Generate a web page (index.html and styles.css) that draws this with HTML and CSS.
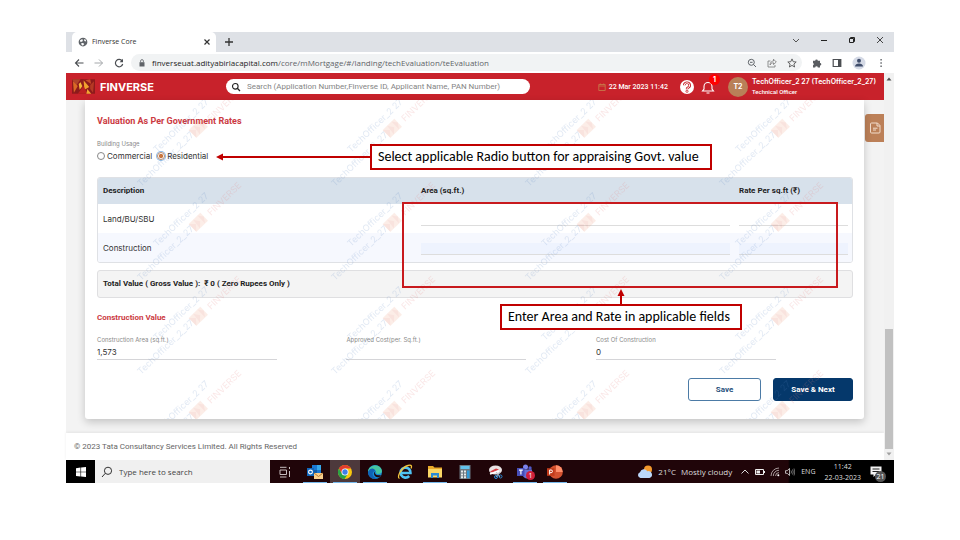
FILE: index.html
```html
<!DOCTYPE html>
<html lang="en">
<head>
<meta charset="utf-8">
<title>Finverse Core</title>
<link rel="stylesheet" href="styles.css">
</head>
<body>
<div class="window">
  <div class="tabstrip">
    <div class="tab">
      <svg class="i10" viewBox="0 0 16 16"><circle cx="8" cy="8" r="7" fill="#5f6368"/><path d="M3 5.500l3-2 2 1-1 2.500-3 1zM10 3l2.500 1.500L13 7l-3-.5zM5 10l3-.5 2 1.500-2 2.500-2-.5z" fill="#fff"/></svg>
      <span class="tab-title">Finverse Core</span>
      <button class="plain" aria-label="Close tab"><svg class="i8" viewBox="0 0 8 8"><path d="M1.500 1.500l5 5m0-5l-5 5" stroke="#333" stroke-width="1.200"/></svg></button>
    </div>
    <button class="plain newtab" aria-label="New tab"><svg class="i10" viewBox="0 0 10 10"><path d="M5 1v8M1 5h8" stroke="#333" stroke-width="1.300"/></svg></button>
    <div class="wincontrols">
      <button class="plain" aria-label="Search tabs"><svg class="i8" viewBox="0 0 8 8"><path d="M1 3l3 3 3-3" fill="none" stroke="#555"/></svg></button>
      <button class="plain" aria-label="Minimize"><svg class="i8" viewBox="0 0 8 8"><path d="M1 4.500h6" stroke="#222"/></svg></button>
      <button class="plain" aria-label="Restore"><svg class="i8" viewBox="0 0 8 8"><path d="M1.500 2.500h4v4h-4zM2.500 2.500v-1h4v4h-1" fill="none" stroke="#222"/></svg></button>
      <button class="plain" aria-label="Close"><svg class="i8" viewBox="0 0 8 8"><path d="M1 1l6 6m0-6l-6 6" stroke="#333" stroke-width=".9"/></svg></button>
    </div>
  </div>
  <div class="toolbar">
    <button class="plain" aria-label="Back"><svg class="i10" viewBox="0 0 10 10"><path d="M9.500 5H1.500m3.500-3.500L1.500 5 5 8.500" fill="none" stroke="#4b4e52" stroke-width="1.100"/></svg></button>
    <button class="plain" aria-label="Forward"><svg class="i10" viewBox="0 0 10 10"><path d="M.5 5h8M5 1.500L8.500 5 5 8.500" fill="none" stroke="#a4a7aa"/></svg></button>
    <button class="plain" aria-label="Reload"><svg class="i10" viewBox="0 0 10 10"><path d="M8.200 3A3.700 3.700 0 1 0 8.700 6" fill="none" stroke="#4b4e52" stroke-width="1.200"/><path d="M9 .8v3.400H5.600z" fill="#4b4e52"/></svg></button>
    <div class="address">
      <svg class="i8" viewBox="0 0 8 8"><path d="M1.500 3.200h5V7.500h-5z" fill="#5f6368"/><path d="M2.600 3.200V2a1.400 1.400 0 0 1 2.800 0v1.200" fill="none" stroke="#5f6368" stroke-width=".8"/></svg>
      <span class="url"><span class="host">finverseuat.adityabirlacapital.com</span>/core/mMortgage/#/landing/techEvaluation/teEvaluation</span>
      <svg class="i10" viewBox="0 0 10 10"><circle cx="4.300" cy="4.300" r="3" fill="none" stroke="#5f6368"/><path d="M6.500 6.500L9 9M3 4.300h2.600" stroke="#5f6368"/></svg>
      <svg class="i10" viewBox="0 0 10 10"><path d="M3.500 3H1v6h7V7M3 7c.3-2.600 1.600-4 3.500-4V1.200L9.300 4 6.500 6.500V4.800C5 4.800 4 5.500 3 7z" fill="none" stroke="#777" stroke-width=".8"/></svg>
      <svg class="i10" viewBox="0 0 10 10"><path d="M5 .9l1.200 2.800 3 .3-2.300 2 .7 3L5 7.400 2.400 9l.7-3L.8 4l3-.3z" fill="none" stroke="#555" stroke-width=".9"/></svg>
    </div>
    <button class="plain" aria-label="Extensions"><svg class="i10" viewBox="0 0 10 10"><path d="M1 2.800h2.200a1.300 1.300 0 1 1 2.600 0H8V5a1.300 1.300 0 1 1 0 2.600v2H5.800a1.300 1.300 0 0 0-2.600 0H1V7.300a1.300 1.300 0 0 0 0-2.400z" fill="#5a5d61"/></svg></button>
    <button class="plain" aria-label="Side panel"><svg class="i10" viewBox="0 0 10 10"><path d="M1.200 1.500h7.600v7H1.200z" fill="none" stroke="#4b4e52" stroke-width="1.200"/><path d="M6 1.500h3v7H6z" fill="#4b4e52"/></svg></button>
    <button class="plain" aria-label="Profile"><svg class="i14" viewBox="0 0 14 14"><circle cx="7" cy="7" r="6.500" fill="#d5dae6"/><circle cx="7" cy="4.700" r="2" fill="#3f4d6b"/><path d="M3 10.500c0-4 8-4 8 0z" fill="#3f4d6b"/></svg></button>
    <button class="plain" aria-label="Menu"><svg class="i10" viewBox="0 0 10 10"><path d="M4.400 1h1.400v1.400H4.400zM4.400 4.300h1.400v1.400H4.400zM4.400 7.600h1.400V9H4.400z" fill="#5f6368"/></svg></button>
  </div>

  <div class="viewport">
    <div class="page">
      <header class="appbar">
        <div class="brand">
          <svg class="logo" viewBox="0 0 24 15"><path d="M0 0h24v15H0z" fill="#8d1a1b"/><path d="M0 0h9l-5 7z" fill="#b0432a"/><path d="M1 2l5 5-4 7z" fill="#d96a26"/><path d="M7 5l3-3 1 5-3 4z" fill="#f6b43a"/><path d="M12 1l6 7-5 3z" fill="#f1a02e"/><path d="M14 1l5-1 1 5z" fill="#c94b27"/><path d="M19 6l4-4-1 12-3-4z" fill="#b53a24"/><path d="M6 15l6-8 4 8z" fill="#be2022"/><path d="M16 10l4 5h-5z" fill="#f2a433"/><path d="M9 0l3 0-1 8-2-5z" fill="#8f1c1c"/></svg>
          <span class="brand-name">FINVERSE</span>
        </div>
        <label class="search">
          <svg class="i10" viewBox="0 0 10 10"><circle cx="4.300" cy="4.300" r="2.800" fill="none" stroke="#222" stroke-width="1.100"/><path d="M6.300 6.300L9 9" stroke="#222" stroke-width="1.300"/></svg>
          <input type="search" aria-label="Search" placeholder="Search (Application Number,Finverse ID, Applicant Name, PAN Number)">
        </label>
        <div class="date">
          <svg class="i8" viewBox="0 0 8 8"><path d="M.8 1.500h6.400v6H.8zM.8 3h6.400M2.300.5v1.500M5.700.5v1.500" fill="none" stroke="#c77548" stroke-width=".9"/></svg>
          <span>22 Mar 2023 11:42</span>
        </div>
        <button class="plain help" aria-label="Help"><svg class="i14" viewBox="0 0 14 14"><circle cx="7" cy="7" r="7" fill="#fff"/><path d="M4.300 5.300a2.700 2.500 0 1 1 3.700 2.300q-1 .4-1 1.600" fill="none" stroke="#c8222b" stroke-width="2.600"/><path d="M4.300 5.300a2.700 2.500 0 1 1 3.700 2.300q-1 .4-1 1.600" fill="none" stroke="#fff" stroke-width="1"/><circle cx="7" cy="11.300" r="1.100" fill="#fff" stroke="#c8222b" stroke-width=".8"/></svg></button>
        <button class="plain bell" aria-label="Notifications">
          <svg class="i14" viewBox="0 0 14 14"><path d="M1.500 11h11L11 9V6.500a4 4 0 0 0-8 0V9zM5.500 13h3" fill="none" stroke="#fff" stroke-width="1.100"/></svg>
          <span class="badge">1</span>
        </button>
        <span class="avatar">T2</span>
        <div class="user"><b>TechOfficer_2 27 (TechOfficer_2_27)</b><span>Technical Officer</span></div>
      </header>

      <div class="content">
        <main class="card">
          <h2>Valuation As Per Government Rates</h2>
          <fieldset class="usage">
            <legend>Building Usage</legend>
            <label><input type="radio" name="usage"><span>Commercial</span></label>
            <label><input type="radio" name="usage" checked><span>Residential</span></label>
          </fieldset>
          <div class="table-frame">
            <table>
              <thead><tr><th scope="col">Description</th><th scope="col">Area (sq.ft.)</th><th scope="col">Rate Per sq.ft (₹)</th></tr></thead>
              <tbody>
                <tr><td>Land/BU/SBU</td><td><input type="text" aria-label="Land area"></td><td><input type="text" aria-label="Land rate"></td></tr>
                <tr><td>Construction</td><td><input type="text" aria-label="Construction area"></td><td><input type="text" aria-label="Construction rate"></td></tr>
              </tbody>
            </table>
          </div>
          <p class="total">Total Value ( Gross Value ):&nbsp; ₹ 0 ( Zero Rupees Only )</p>
          <h3>Construction Value</h3>
          <div class="fields">
            <div class="field"><label for="carea">Construction Area (sq.ft.)</label><input id="carea" type="text" value="1,573"></div>
            <div class="field"><label for="ccost">Approved Cost(per. Sq.ft.)</label><input id="ccost" type="text"></div>
            <div class="field"><label for="ctotal">Cost Of Construction</label><input id="ctotal" type="text" value="0"></div>
          </div>
          <div class="actions">
            <button class="btn">Save</button>
            <button class="btn primary">Save &amp; Next</button>
          </div>

          <svg class="watermark" aria-hidden="true">
            <defs>
              <pattern id="wm" x="40" y="-13" width="194" height="94" patternUnits="userSpaceOnUse">
                <g id="mark">
                  <g fill="#5b86c4" font-size="9">
                    <text transform="translate(32 66) rotate(-44)">TechOfficer_2 27</text>
                    <text transform="translate(16 100) rotate(-44)">TechOfficer_2_27</text>
                  </g>
                  <g transform="translate(73 41) rotate(-44)">
                    <path d="M-8-5H8V6H-8z" fill="#f0a080"/><path d="M-8-5l5 5-5 6zM-2-5l4 6-5 5zM4-5l4 5-4 6z" fill="#e26a50"/>
                  </g>
                  <text transform="translate(86 35) rotate(-44)" fill="#e88080" font-size="9">FINVERSE</text>
                </g>
                <use href="#mark" y="-94"/>
                <use href="#mark" y="94"/>
              </pattern>
            </defs>
            <rect width="100%" height="100%" fill="url(#wm)"/>
          </svg>

          <div class="outline"></div>
          <div class="callout usage-note">Select applicable Radio button for appraising Govt. value
            <svg class="arrow-left" viewBox="0 0 156 8" preserveAspectRatio="none"><path d="M5 4h151" stroke="#c00000" stroke-width="2"/><path d="M0 4l7-3.500v7z" fill="#c00000"/></svg>
          </div>
          <div class="callout rate-note">Enter Area and Rate in applicable fields
            <svg class="arrow-up" viewBox="0 0 8 17"><path d="M4 5v12" stroke="#c00000" stroke-width="2"/><path d="M4 0l3.500 7h-7z" fill="#c00000"/></svg>
          </div>
        </main>
        <button class="sidetab" aria-label="Documents"><svg class="i12" viewBox="0 0 12 12"><path d="M2.500 1h6L11 3.500V10q0 1-1 1H2.500q-1 0-1-1V2q0-1 1-1zM8 1v3h3M4 6.200h4.500M4 8h3" fill="none" stroke="#f2dccb"/></svg></button>
      </div>
      <footer>© 2023 Tata Consultancy Services Limited. All Rights Reserved</footer>
    </div>
    <div class="scrollbar">
      <svg class="i8" viewBox="0 0 8 8"><path d="M4 2.500L6.500 5.500h-5z" fill="#505050"/></svg>
      <div class="thumb"></div>
      <svg class="i8" viewBox="0 0 8 8"><path d="M4 5.500L6.500 2.500h-5z" fill="#a0a0a0"/></svg>
    </div>
  </div>

  <div class="taskbar">
    <button class="start" aria-label="Start"><svg class="i10" viewBox="0 0 10 10"><path d="M0 1.200l4.500-.7v4.200H0zM5.100.5L10 0v4.700H5.100zM0 5.300h4.500v4.200L0 8.900zM5.100 5.300H10V10l-4.900-.6z" fill="#fff"/></svg></button>
    <label class="tasksearch"><svg class="i12" viewBox="0 0 12 12"><circle cx="7" cy="4.800" r="3.600" fill="none" stroke="#333"/><path d="M4.300 7.300L1 11" stroke="#333"/></svg><input type="text" aria-label="Type here to search" placeholder="Type here to search"></label>
    <div class="apps">
      <button class="app" aria-label="Task view"><svg class="i12" viewBox="0 0 12 12"><path d="M1 4h6.500v4.500H1zM1 1.300h6.500M1 11h6.500M10.500 1v2M10.500 5v6" fill="none" stroke="#c8bfc0"/></svg></button>
      <button class="app open" aria-label="Outlook"><svg class="i16" viewBox="0 0 16 16"><path d="M5 1h9v10H5z" fill="#1b78d2"/><path d="M10 1h4v5h-4z" fill="#35a8ea"/><path d="M5 6h5v5H5z" fill="#0f5ba8"/><path d="M0 4h7v8H0z" fill="#1066bb"/><circle cx="3.500" cy="8" r="1.900" fill="none" stroke="#fff" stroke-width="1.100"/><path d="M7 9h9v6H7z" fill="#f9cf8c"/><path d="M7 9l4.500 3.500L16 9" fill="none" stroke="#b87b35"/></svg></button>
      <button class="app open active" aria-label="Chrome"><svg class="i16" viewBox="0 0 16 16"><circle cx="8" cy="8" r="7" fill="#f9c80e"/><path d="M1.900 4.500A7 7 0 0 1 14 4.500H8L5 9.700z" fill="#e33b2e"/><path d="M1.900 4.500A7 7 0 0 0 7.500 15L11 9.700 5 9.700z" fill="#27a346"/><circle cx="8" cy="8" r="3.500" fill="#fff"/><circle cx="8" cy="8" r="2.700" fill="#3f7fe8"/></svg></button>
      <button class="app open" aria-label="Edge"><svg class="i16" viewBox="0 0 16 16"><circle cx="8" cy="8" r="7" fill="#168bd5"/><path d="M1 8C1 0 14-1 15 7c0 3-5 4-6 2 1-3-4-6-8-1z" fill="#45c6a1"/><path d="M1 8c2-5 7-4 7-1-4 1-3 7 3 7.300C6 16.500 1 13 1 8z" fill="#0f62b5"/><path d="M8.500 7.200c-2 3 2 5 5.500 3.800l-1.500 2c-5 1.500-7-4-4-5.800z" fill="#200509"/></svg></button>
      <button class="app" aria-label="Internet Explorer"><svg class="i16" viewBox="0 0 16 16"><path d="M3.500 9h10a5 5 0 1 0-1.300 3" fill="none" stroke="#4fc3f3" stroke-width="2.600"/><path d="M2.500 14.500C-1 13 5 3 11 1.500c4-1 4 1 3 3" fill="none" stroke="#f3c63c" stroke-width="1.300"/></svg></button>
      <button class="app open" aria-label="File Explorer"><svg class="i16" viewBox="0 0 16 16"><path d="M1 2h5l1.500 1.500H15V13H1z" fill="#e9aa2a"/><path d="M1 5h14v8.500H1z" fill="#fbd766"/><path d="M4 9h8v5h-2v-2.500H6V14H4z" fill="#2b8bd4"/></svg></button>
      <button class="app" aria-label="Calculator"><svg class="i16" viewBox="0 0 16 16"><path d="M2.500 1h11v14h-11z" fill="#6b7780"/><path d="M3.500 2h9v3h-9z" fill="#63c2ec"/><path d="M4 6.500h2v2H4zM7 6.500h2v2H7zM4 9.500h2v2H4zM7 9.500h2v2H7zM4 12.200h2v2H4zM7 12.200h2v2H7z" fill="#e6eaec"/><path d="M10 6.500h2.500v7.700H10z" fill="#309bda"/></svg></button>
      <button class="app" aria-label="Snipping Tool"><svg class="i16" viewBox="0 0 16 16"><ellipse cx="8.500" cy="6" rx="6.500" ry="4.500" fill="#e9e4e5"/><path d="M3 7.500l6-3 3 1-7 3z" fill="#d83d43"/><path d="M3 10l9-3" stroke="#fff" stroke-width="1.500"/><path d="M9 8l4 5M13 8l-4 5" stroke="#b8c6d2"/><circle cx="9" cy="13" r="1.500" fill="none" stroke="#2b8bd4"/><circle cx="13.500" cy="12.500" r="1.500" fill="none" stroke="#2b8bd4"/></svg></button>
      <button class="app open" aria-label="Teams"><svg class="i16" viewBox="0 0 16 16"><circle cx="8.500" cy="3" r="2.500" fill="#7b83eb"/><circle cx="13" cy="4" r="1.700" fill="#5059c9"/><path d="M5 5.500h10v5q-2 4-5 4t-5-4z" fill="#6670d5"/><path d="M0 4h7.500v8H0z" fill="#464eb8"/><path d="M2 6.200h3.800M3.900 6.200V10.500" stroke="#fff" stroke-width="1.200"/></svg><span class="app-badge">1</span></button>
      <button class="app open" aria-label="PowerPoint"><svg class="i16" viewBox="0 0 16 16"><circle cx="9" cy="8" r="6.800" fill="#d35230"/><path d="M9 1.200A6.800 6.800 0 0 1 15.800 8H9z" fill="#ff8f6b"/><path d="M0 4.200h7.500v7.600H0z" fill="#c13b1b"/><path d="M2.600 10.500V6h1.500a1.300 1.300 0 0 1 0 2.700H2.600" fill="none" stroke="#fff"/></svg></button>
    </div>
    <div class="weather">
      <svg class="i16" viewBox="0 0 16 16"><circle cx="11" cy="5.500" r="4" fill="#f49a2d"/><path d="M3.500 14a3 3 0 0 1-.5-5.800 4 4 0 0 1 7.300-1A3.500 3.500 0 0 1 12.500 14z" fill="#bcd8fa"/></svg>
      <span>21°C</span><span>Mostly cloudy</span>
    </div>
    <div class="tray">
      <svg class="i10" viewBox="0 0 10 10"><path d="M1.500 6.500L5 3l3.500 3.500" fill="none" stroke="#ddd"/></svg>
      <svg class="i10" viewBox="0 0 10 10"><path d="M.5 2.500h8v5h-8zM9.500 4v2" fill="none" stroke="#eee"/><path d="M1.500 3.500h3.500v3H1.500z" fill="#eee"/></svg>
      <svg class="i10" viewBox="0 0 10 10"><path d="M1 9a8 8 0 0 1 8-8M3.300 9A5.700 5.700 0 0 1 9 3.300M5.600 9A3.400 3.400 0 0 1 9 5.600" fill="none" stroke="#b5a9aa" stroke-width=".9"/><circle cx="8.300" cy="8.300" r="1" fill="#fff"/></svg>
      <svg class="i10" viewBox="0 0 10 10"><path d="M.5 3.700h1.700L4.500 1.500v7L2.200 6.300H.5z" fill="none" stroke="#ddd" stroke-width=".8"/><path d="M6 3.500q1 1.500 0 3M7.500 2.500q1.500 2.500 0 5M9 1.500q1.500 3.500 0 7" fill="none" stroke="#999" stroke-width=".7"/></svg>
      <span class="lang">ENG</span>
      <div class="clock"><span>11:42</span><span>22-03-2023</span></div>
      <div class="notice"><svg class="i12" viewBox="0 0 12 12"><path d="M.5.500h11v8H6L3.500 11V8.500h-3z" fill="#f3f3f3"/><path d="M2.500 3h7M2.500 5.500h7" stroke="#222"/></svg><span class="notice-count">21</span></div>
    </div>
  </div>
</div>
</body>
</html>
```
FILE: styles.css
```css
* { box-sizing: border-box; }
body {
  margin: 0;
  padding: 32px 66px;
  background: #fff;
  color: #333;
  font: 8px/10px Inter, Roboto, sans-serif;
}
button, input { font: inherit; color: inherit; }
svg { display: block; flex: none; }
.i8 { width: 8px; height: 8px; }
.i10 { width: 10px; height: 10px; }
.i12 { width: 12px; height: 12px; }
.i14 { width: 14px; height: 14px; }
.i16 { width: 16px; height: 16px; }
.plain {
  display: flex;
  padding: 0;
  border: 0;
  background: none;
}

/* Browser chrome */
.tabstrip {
  display: flex;
  align-items: center;
  height: 20px;
  padding-left: 6px;
  background: #dee1e6;
  font-family: "Open Sans", sans-serif;
}
.tab {
  display: flex;
  align-items: center;
  align-self: stretch;
  gap: 4px;
  width: 144px;
  padding: 0 5px 0 6px;
  border-radius: 5px 5px 0 0;
  background: #fff;
  font-size: 7px;
}
.tab-title { flex: 1; }
.newtab { margin-left: 8px; }
.wincontrols {
  display: flex;
  gap: 20px;
  margin-left: auto;
  padding: 0 10px 4px 0;
}
.toolbar {
  display: flex;
  align-items: center;
  gap: 10px;
  height: 21px;
  padding: 0 8px;
  background: #fff;
}
.address {
  display: flex;
  flex: 1;
  align-items: center;
  gap: 10px;
  height: 17px;
  margin-left: -3px;
  padding: 0 5px 0 7px;
  border-radius: 9px;
  background: #f1f3f4;
  color: #5f6368;
  font: 8px/10px "Open Sans", sans-serif;
}
.url { flex: 1; margin-left: -4px; }
.host { color: #222; }

.viewport { display: flex; }
.page { flex: 1; min-width: 0; background: #f3f3f3; }
.scrollbar {
  display: flex;
  flex-direction: column;
  align-items: center;
  width: 10px;
  padding: 2px 0;
  background: #f1f1f1;
}
.thumb {
  width: 8px;
  height: 120px;
  margin: auto 0 1px;
  background: #c1c1c1;
}

/* Application header */
.appbar {
  display: flex;
  align-items: center;
  height: 27px;
  padding: 0 8px 0 6px;
  background: #c8222b;
  color: #fff;
}
.brand {
  display: flex;
  align-items: center;
  gap: 5px;
  width: 154px;
}
.logo { width: 23px; height: 15px; }
.brand-name { font: 700 11px/14px Inter, sans-serif; }
.search {
  display: flex;
  align-items: center;
  gap: 6px;
  width: 304px;
  height: 15px;
  padding: 0 5px;
  border-radius: 8px;
  background: #fff;
}
.search input {
  flex: 1;
  min-width: 0;
  padding: 0;
  border: 0;
  outline: 0;
  background: none;
  font: 8px/10px Roboto, sans-serif;
}
.search input::placeholder { color: #858585; opacity: 1; }
.date {
  display: flex;
  align-items: center;
  gap: 3px;
  margin-left: auto;
  font: 500 7px/10px Roboto, sans-serif;
}
.help { margin-left: 12px; }
.bell { position: relative; margin-left: 7px; }
.badge {
  position: absolute;
  top: -6px;
  right: -5px;
  width: 11px;
  height: 11px;
  border-radius: 50%;
  background: #f00;
  color: #fff;
  font: 700 7px/11px Inter, sans-serif;
  text-align: center;
}
.avatar {
  width: 20px;
  height: 20px;
  margin-left: 13px;
  border-radius: 50%;
  background: #b98058;
  font: 700 7px/20px Inter, sans-serif;
  text-align: center;
}
.user {
  display: flex;
  flex-direction: column;
  margin-left: 4px;
  font: 500 6px/9px Roboto, sans-serif;
}
.user b { font: 600 7px/10px Inter, sans-serif; }

/* Valuation form */
.content { display: flex; align-items: flex-start; }
.card {
  position: relative;
  flex: 1;
  min-width: 0;
  margin: 0 1px 14px 19px;
  padding: 15px 11px 18px 12px;
  border-radius: 0 0 3px 3px;
  background: #fff;
  box-shadow: 0 3px 8px #0003;
}
h2, h3 {
  margin: 0;
  color: #cb3a42;
  font: 700 9px/12px Roboto, sans-serif;
}
h3 { font-size: 8px; }
.usage {
  display: flex;
  gap: 5px;
  margin: 12px 0 14px;
  padding: 0;
  border: 0;
}
.usage legend {
  padding: 0;
  color: #888;
  font-size: 6px;
}
.usage label { display: flex; align-items: center; gap: 2px; height: 14px; }
.usage input {
  appearance: none;
  width: 8px;
  height: 8px;
  margin: 0;
  border: 1px solid #888;
  border-radius: 50%;
  background: #fff;
}
.usage input:checked {
  border-color: #b98a6c;
  background: radial-gradient(#c9763d 45%, #fff 55%);
  box-shadow: 0 0 0 1px #8bbbe8;
}
.table-frame {
  overflow: hidden;
  border: 1px solid #dfe1e5;
  border-radius: 3px;
}
table {
  width: 100%;
  border-spacing: 0;
  table-layout: fixed;
}
th, td { padding: 0 4px 0 5px; text-align: left; }
th {
  height: 26px;
  background: #d7e1eb;
  color: #222;
  font: 700 8px/10px Roboto, sans-serif;
}
th:last-child { width: 118px; }
td { height: 29px; }
tbody tr:last-child { background: #f6f8fe; }
td input {
  display: block;
  width: 100%;
  height: 12px;
  margin-top: 3px;
  padding: 0;
  border: 0;
  border-bottom: 1px solid #ddd;
  background: none;
}
tbody tr:last-child input { background: #eef3fe; }
.total {
  margin: 7px 0 14px;
  padding: 8px 5px;
  border: 1px solid #dfdfe1;
  border-radius: 3px;
  background: #f4f4f4;
  color: #222;
  font: 700 8px/10px Roboto, sans-serif;
}
.fields {
  display: grid;
  grid-template-columns: repeat(3, 33%);
  margin-top: 11px;
}
.field { display: flex; flex-direction: column; width: 180px; }
.field label { color: #8a8a8a; font-size: 6px; }
.field input {
  height: 15px;
  padding: 0;
  border: 0;
  border-bottom: 1px solid #d5d5d8;
  background: none;
}
.actions {
  display: flex;
  justify-content: flex-end;
  gap: 12px;
  margin-top: 18px;
}
.btn {
  width: 73px;
  height: 23px;
  padding: 0;
  border: 1px solid #4c7ba6;
  border-radius: 3px;
  background: #fff;
  color: #28527c;
  font: 700 8px/10px Roboto, sans-serif;
}
.primary { width: 80px; border-color: #05386b; background: #05386b; color: #fff; }
.sidetab {
  display: flex;
  align-items: center;
  justify-content: center;
  width: 19px;
  height: 28px;
  margin-top: 14px;
  padding: 0;
  border: 0;
  border-radius: 3px 0 0 3px;
  background: #bc8058;
}
.watermark {
  position: absolute;
  top: 0;
  left: 0;
  width: 100%;
  height: 100%;
  opacity: .18;
  pointer-events: none;
  font-family: Inter, sans-serif;
}

/* Annotations over the form */
.outline {
  position: absolute;
  top: 102px;
  right: 26px;
  left: 317px;
  height: 86px;
  border: 2px solid #c81a1e;
}
.callout {
  position: absolute;
  padding: 2px 6px;
  border: 2px solid #c00000;
  background: #fff;
  color: #000;
  font: 14px/21px Carlito, Lato, sans-serif;
  white-space: nowrap;
}
.usage-note { top: 44px; left: 285px; width: 342px; line-height: 18px; }
.rate-note { top: 204px; left: 415px; width: 242px; line-height: 18px; }
.arrow-left {
  position: absolute;
  top: 7px;
  right: 100%;
  width: 156px;
  height: 8px;
}
.arrow-up {
  position: absolute;
  bottom: 100%;
  left: 50%;
  width: 8px;
  height: 17px;
  margin-left: -4px;
}
footer {
  padding: 8px;
  background: #fff;
  box-shadow: 0 -1px 3px #0001;
  color: #666;
  font: 8px/11px Roboto, sans-serif;
}

/* Taskbar */
.taskbar {
  display: flex;
  align-items: center;
  height: 23px;
  background: #200509;
  color: #ddd;
  font: 8px/11px "Open Sans", sans-serif;
}
.start {
  display: flex;
  align-items: center;
  justify-content: center;
  align-self: stretch;
  width: 29px;
  padding: 0;
  border: 0;
  background: #000;
}
.tasksearch {
  display: flex;
  align-items: center;
  align-self: stretch;
  gap: 6px;
  width: 175px;
  padding: 0 6px;
  background: #f0f0f0;
}
.tasksearch input {
  flex: 1;
  min-width: 0;
  padding: 0;
  border: 0;
  background: none;
}
.tasksearch input::placeholder { color: #444; opacity: 1; }
.apps { display: flex; align-self: stretch; }
.app {
  position: relative;
  display: flex;
  align-items: center;
  justify-content: center;
  width: 30px;
  padding: 0;
  border: 0;
  background: none;
}
.active { background: #4d393c; }
.open::after {
  position: absolute;
  right: 3px;
  bottom: 0;
  left: 3px;
  height: 1px;
  background: #76b9ed;
  content: "";
}
.app-badge {
  position: absolute;
  right: 5px;
  bottom: 3px;
  width: 9px;
  height: 9px;
  border-radius: 50%;
  background: #d0213c;
  color: #fff;
  font: 7px/9px "Open Sans", sans-serif;
}
.weather {
  display: flex;
  align-items: center;
  gap: 5px;
  margin-left: auto;
}
.tray {
  display: flex;
  align-items: center;
  align-self: stretch;
  gap: 5px;
  margin-left: 8px;
  padding-right: 12px;
  background: linear-gradient(90deg, #200509 48px, #000 50px);
}
.lang { margin-left: 1px; font-size: 7px; }
.clock {
  display: flex;
  flex-direction: column;
  margin: 0 4px;
  font-size: 7px;
  text-align: center;
}
.notice { position: relative; }
.notice-count {
  position: absolute;
  right: -4px;
  bottom: -4px;
  width: 11px;
  height: 11px;
  border-radius: 50%;
  background: #555;
  color: #fff;
  font: 7px/11px "Open Sans", sans-serif;
  text-align: center;
}
```
